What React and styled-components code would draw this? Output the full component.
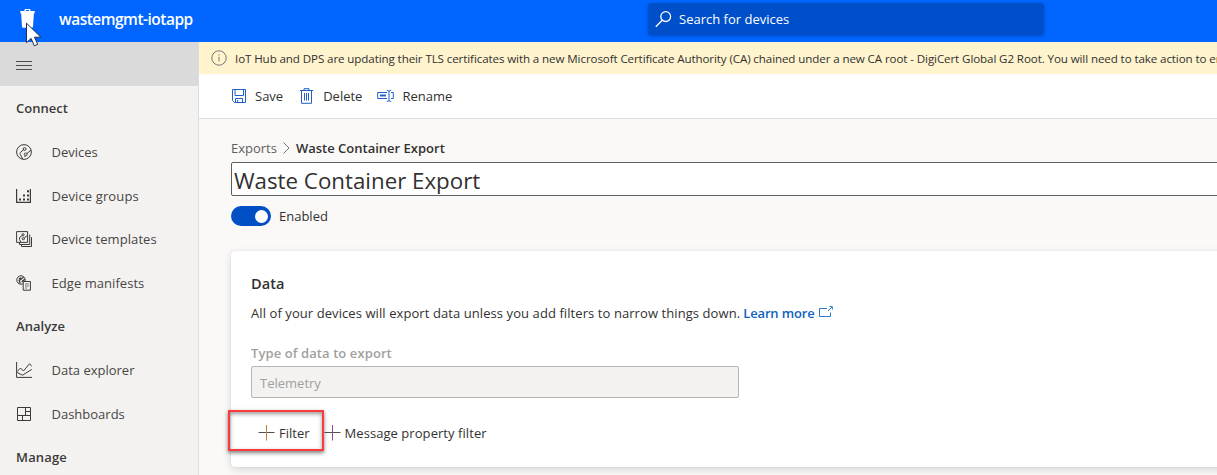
import React from 'react';
import styled, { createGlobalStyle } from 'styled-components';

const GlobalStyle = createGlobalStyle`
  *, *::before, *::after { box-sizing: border-box; }
  body {
    margin: 0;
    overflow: hidden;
    background: #faf9f8;
    color: #323130;
    font-family: "Open Sans", "Noto Sans", sans-serif;
    font-size: 13px;
  }
`;

const Page = styled.div`
  height: 475px;
  overflow: hidden;
  display: flex;
  flex-direction: column;
`;

const TopBar = styled.header`
  position: relative;
  flex: none;
  display: flex;
  height: 42px;
  background: #0066ff;
  color: #fff;
`;

const AppLogo = styled.svg`
  flex: none;
  width: 16px;
  height: 20px;
  margin: 9px 0 0 20px;
`;

const AppName = styled.div`
  flex: none;
  width: 612px;
  padding-left: 23px;
  font-size: 15.5px;
  font-weight: 600;
  letter-spacing: -0.5px;
  line-height: 39px;
`;

const SearchBox = styled.div`
  display: flex;
  align-items: center;
  width: 396px;
  height: 32px;
  margin-top: 3px;
  padding-left: 7px;
  gap: 7px;
  border-radius: 3px;
  background: #004fca;
  box-shadow: 0 1px 3px rgba(0, 20, 90, 0.35);
  line-height: 32px;
`;

const Pointer = styled.svg`
  position: absolute;
  left: 25px;
  top: 22px;
  z-index: 2;
`;

const Body = styled.div`
  flex: 1;
  display: flex;
  min-height: 0;
`;

const Sidebar = styled.nav`
  flex: none;
  width: 199px;
  background: #f3f2f1;
  border-right: 1px solid #dddcdb;
`;

const MenuButton = styled.div`
  display: flex;
  align-items: center;
  height: 44px;
  padding: 2px 0 0 16px;
  background: #dadada;
`;

const NavHeading = styled.div`
  height: 43.65px;
  padding-left: 16px;
  line-height: 45px;
  font-weight: 600;
  color: #3b3a39;
  letter-spacing: ${p => p.$track || 0}px;
`;

const NavItem = styled.div`
  display: flex;
  align-items: center;
  gap: 19.5px;
  height: 43.65px;
  padding: 1px 0 0 16px;
  color: #484644;
  letter-spacing: ${p => p.$track || 0}px;
  svg { flex: none; }
`;

const Main = styled.main`
  flex: 1;
  min-width: 0;
  overflow: hidden;
`;

const Notice = styled.div`
  display: flex;
  align-items: center;
  height: 32px;
  padding-left: 12px;
  gap: 8px;
  background: #fff4ce;
  font-size: 11.6px;
  letter-spacing: -0.107px;
  white-space: nowrap;
  svg { flex: none; }
`;

const Toolbar = styled.div`
  display: flex;
  height: 45px;
  padding-left: 32px;
  background: #fff;
  border-bottom: 1px solid #e1dfdd;
`;

const Command = styled.div`
  display: flex;
  align-items: center;
  gap: 8px;
  margin-right: ${p => p.$after || 0}px;
`;

const Content = styled.div`
  padding: 19px 0 0 32px;
`;

const Breadcrumb = styled.div`
  display: flex;
  align-items: center;
  height: 20px;
  gap: 6px;
  color: #605e5c;
  b { font-weight: 600; color: #323130; }
`;

const NameField = styled.div`
  width: 1100px;
  height: 34px;
  margin-top: 4px;
  padding-left: 2px;
  border: 1px solid #605e5c;
  border-radius: 2px;
  background: #fff;
  font-size: 22.3px;
  line-height: 35px;
`;

const ToggleRow = styled.div`
  display: flex;
  align-items: center;
  gap: 8px;
  height: 20px;
  margin-top: 10px;
`;

const Toggle = styled.div`
  display: flex;
  align-items: center;
  justify-content: flex-end;
  width: 40px;
  height: 20px;
  padding-right: 3px;
  border-radius: 10px;
  background: #004fc4;
  &::after {
    content: "";
    width: 13px;
    height: 13px;
    border-radius: 50%;
    background: #fff;
  }
`;

const Card = styled.section`
  width: 1100px;
  height: 216px;
  margin-top: 25px;
  padding: 22px 20px 0;
  border-radius: 4px;
  background: #fff;
  box-shadow: 0 3px 8px rgba(0, 0, 0, 0.13), 0 0 2px rgba(0, 0, 0, 0.1);
`;

const CardTitle = styled.h2`
  margin: 0;
  font-size: 14.6px;
  font-weight: 600;
  line-height: 21px;
`;

const Description = styled.p`
  display: flex;
  align-items: center;
  margin: 9px 0 0;
  line-height: 20px;
  letter-spacing: 0.08px;
`;

const Link = styled.a`
  display: flex;
  gap: 3px;
  margin-left: 3px;
  color: #0f62bd;
  font-weight: 600;
  letter-spacing: -0.14px;
`;

const FieldLabel = styled.div`
  margin-top: 20px;
  line-height: 20px;
  font-weight: 600;
  color: #a19f9d;
  letter-spacing: 0.09px;
`;

const TypeField = styled.div`
  width: 488px;
  height: 32px;
  margin-top: 3px;
  padding-left: 8px;
  border: 1px solid #b8b6b4;
  border-radius: 2px;
  background: #f3f2f1;
  color: #a19f9d;
  line-height: 32px;
`;

const FilterActions = styled.div`
  position: relative;
  display: flex;
  align-items: center;
  gap: 14px;
  height: 20px;
  margin-top: 25px;
  padding-left: 7px;
`;

const FilterButton = styled.div`
  display: flex;
  align-items: center;
  gap: 4px;
  letter-spacing: ${p => p.$track || 0}px;
`;

const Highlight = styled.div`
  position: absolute;
  left: -23px;
  top: -13px;
  width: 96px;
  height: 41px;
  border: 2px solid #fb3b3b;
  box-shadow: 0 2px 4px rgba(0, 0, 0, 0.5), inset 0 2px 4px rgba(0, 0, 0, 0.4);
`;

const Icon = ({ w = 16, h = 16, color = '#3b3a39', sw = 1, children }) => (
  <svg width={w} height={h} viewBox={`0 0 ${w} ${h}`} fill="none" stroke={color} strokeWidth={sw}>
    {children}
  </svg>
);

const DevicesIcon = () => (
  <Icon>
    <circle cx="8" cy="8" r="7.4" />
    <circle cx="8.6" cy="5" r="1.4" />
    <circle cx="9.7" cy="10.4" r="1.4" />
    <path d="M7.4 5.9 4.6 8.3Q3.5 9.4 4.3 10.5L6.7 15M10.8 9.6 15 6.2M9.3 11.8l-.6 1.2" />
  </Icon>
);

const GroupsIcon = () => (
  <Icon>
    <path d="M.6 1v13.4h13.8V1" strokeWidth="1.2" />
    <path d="M3 11.5h2M7 11.5h2M11 11.5h2M7 7.5h2M11 7.5h2M11 3.3h2" strokeWidth="2" />
  </Icon>
);

const TemplatesIcon = () => (
  <Icon>
    <path d="M.6.6h11v10.8H.6zM3.5 11.5v2h10.2V3.5M5.5 13.5v2h10V6.2" />
    <circle cx="7" cy="3.8" r="1.1" />
    <circle cx="7.3" cy="7.7" r="1.1" />
    <path d="M6.2 4.6 3.5 6.5v2l1.5 2.7M8.2 7l3-2.4" />
  </Icon>
);

const ManifestIcon = () => (
  <Icon>
    <circle cx="5" cy="5" r="4.2" />
    <path d="M7.5 2.2 3.2 5.5l1 3M8.8 4.2 5.7 6.7M3 3.8l2-1" strokeWidth="1.3" />
    <path d="M7.2 6.5h7.2v8.7H7.2z" fill="#f3f2f1" />
    <path d="M9 9h3.8M9 11h3.8M9 13h2" strokeWidth=".7" />
  </Icon>
);

const ExplorerIcon = () => (
  <Icon>
    <path d="M.6 0v15.4H16M1.2 9.5 4.5 6l3 3L13.4 1.8 15.8 4M1.2 10.5l5.3 2.7L15.8 7.4" />
  </Icon>
);

const DashboardIcon = () => (
  <Icon>
    <path d="M1.5 1.5h13v13h-13zM9.5 1.5v8M1.5 9.5h13M9.5 5.5h5M6.5 9.5v5" />
  </Icon>
);

const PlusIcon = ({ vertical }) => (
  <Icon w={17} h={16}>
    <path d="M.5 7.5h16" stroke="#55504c" />
    <path d="M8.5 0v15.5" stroke={vertical} />
  </Icon>
);

export default function App() {
  return (
    <Page>
      <GlobalStyle />
      <TopBar>
        <AppLogo viewBox="0 0 16 20" fill="#fff">
          <path d="M.3 2h4.2V1Q4.5 0 5.5 0h4q1 0 1 1v1h4.2v2.2H.3zM6 1.1V2h3v-.9zM1.1 4h12.8L13 17.4q-.1 1.3-1.4 1.3H3.4q-1.3 0-1.4-1.3z" />
        </AppLogo>
        <AppName>wastemgmt-iotapp</AppName>
        <SearchBox>
          <Icon w={17} h={18} color="#fff" sw={1.3}>
            <circle cx="10.7" cy="6.6" r="4.9" />
            <path d="M7.2 10.2.8 16.7" />
          </Icon>
          Search for devices
        </SearchBox>
        <Pointer width="18" height="26" viewBox="0 0 18 26">
          <path
            d="M1.5 1.2v19.4l4.6-4.2 3.2 7.4 3.4-1.5-3.2-7.1h6.4z"
            fill="#fff"
            stroke="#1d2b55"
            strokeWidth="1"
          />
        </Pointer>
      </TopBar>
      <Body>
        <Sidebar>
          <MenuButton>
            <Icon h={10} color="#504e4c"><path d="M0 1.5h16M0 5.5h16M0 9.5h16" /></Icon>
          </MenuButton>
          <NavHeading>Connect</NavHeading>
          <NavItem><DevicesIcon />Devices</NavItem>
          <NavItem $track={0.12}><GroupsIcon />Device groups</NavItem>
          <NavItem $track={0.08}><TemplatesIcon />Device templates</NavItem>
          <NavItem $track={0.05}><ManifestIcon />Edge manifests</NavItem>
          <NavHeading $track={0.05}>Analyze</NavHeading>
          <NavItem><ExplorerIcon />Data explorer</NavItem>
          <NavItem><DashboardIcon />Dashboards</NavItem>
          <NavHeading $track={0.15}>Manage</NavHeading>
        </Sidebar>
        <Main>
          <Notice>
            <Icon color="#797775">
              <circle cx="8" cy="8" r="7.2" />
              <path d="M8 6.8v4.7M8 4.2v1.3" />
            </Icon>
            IoT Hub and DPS are updating their TLS certificates with a new Microsoft Certificate Authority (CA) chained under a new CA root - DigiCert Global G2 Root. You will need to take action to ensure your devices stay connected.
          </Notice>
          <Toolbar>
            <Command $after={16}>
              <Icon color="#2160c4">
                <path d="M1.5 1.5h13v13h-11l-2-2zM4 1.5v6h8.5v-6M4.5 14.5v-4h7v4M6.7 12v2.5" />
              </Icon>
              Save
            </Command>
            <Command $after={15}>
              <Icon color="#2160c4">
                <path d="M1 2.5h13M5 2.5V.7h5v1.8M2.5 2.5v12.8h10V2.5M5.5 5v7.5M7.5 5v7.5M9.5 5v7.5" />
              </Icon>
              Delete
            </Command>
            <Command>
              <Icon w={17} color="#2160c4">
                <path d="M10 4.5H.7v6H10M14 4.5h2.3v6H14M12 3v9.5M9.8 2.3q2 0 2.2 1.2.2-1.2 2.2-1.2M9.8 13.5q2 0 2.2-1.2.2 1.2 2.2 1.2" />
                <path d="M3 7.5h6" strokeWidth="2" />
              </Icon>
              Rename
            </Command>
          </Toolbar>
          <Content>
            <Breadcrumb>
              Exports
              <Icon w={7} h={14} color="#797775"><path d="m.5 1.5 5.5 5.5-5.5 5.5" /></Icon>
              <b>Waste Container Export</b>
            </Breadcrumb>
            <NameField>Waste Container Export</NameField>
            <ToggleRow><Toggle />Enabled</ToggleRow>
            <Card>
              <CardTitle>Data</CardTitle>
              <Description>
                All of your devices will export data unless you add filters to narrow things down.
                <Link>
                  Learn more
                  <Icon h={16} color="#2b79c9">
                    <path d="M9 5.5H1.5v8h11V9.5M10 8 14 4M11.5 3.6h2.9v2.9" />
                  </Icon>
                </Link>
              </Description>
              <FieldLabel>Type of data to export</FieldLabel>
              <TypeField>Telemetry</TypeField>
              <FilterActions>
                <FilterButton><PlusIcon vertical="#b78a3c" />Filter</FilterButton>
                <FilterButton $track={0.06}><PlusIcon vertical="#8d4f92" />Message property filter</FilterButton>
                <Highlight />
              </FilterActions>
            </Card>
          </Content>
        </Main>
      </Body>
    </Page>
  );
}
